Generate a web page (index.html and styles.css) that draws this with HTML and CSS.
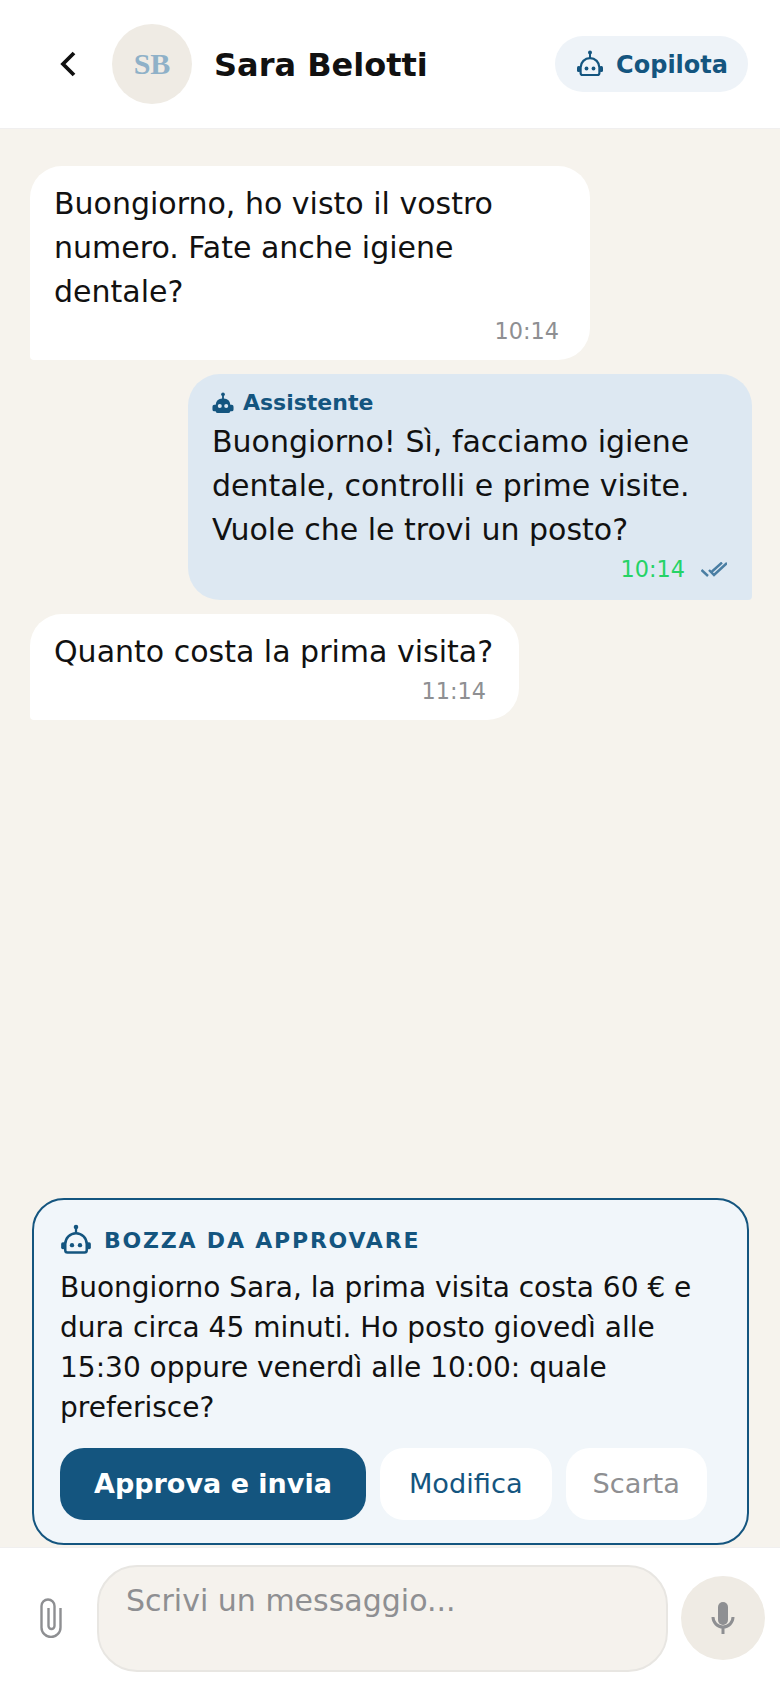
FILE: index.html
```html
<!DOCTYPE html>
<html lang="it">
<head>
    <meta charset="UTF-8">
    <meta name="viewport" content="width=device-width, initial-scale=1.0">
    <title>Sara Belotti</title>
    <link rel="stylesheet" href="styles.css">
</head>
<body>
    <svg class="defs" width="0" height="0">
        <symbol id="bot" viewBox="0 0 28 28">
            <circle cx="14" cy="2.6" r="2" fill="currentColor"/>
            <path d="M14 4v4" stroke="currentColor" stroke-width="2" fill="none"/>
            <path d="M4.6 17.5a9.4 9.4 0 0 1 18.8 0V23a2 2 0 0 1-2 2H6.600a2 2 0 0 1-2-2z" fill="none" stroke="currentColor" stroke-width="2.2"/>
            <rect x="1" y="16" width="3.600" height="6" rx="1.500" fill="currentColor"/>
            <rect x="23.400" y="16" width="3.600" height="6" rx="1.500" fill="currentColor"/>
            <circle cx="10.500" cy="18.500" r="1.900" fill="currentColor"/>
            <circle cx="17.500" cy="18.500" r="1.900" fill="currentColor"/>
        </symbol>
    </svg>

    <header class="topbar">
        <button class="back" type="button" aria-label="Indietro">
            <svg width="16" height="26" viewBox="0 0 16 26"><path d="M14 2 3 13l11 11" fill="none" stroke="#111" stroke-width="3.800"/></svg>
        </button>
        <div class="avatar">SB</div>
        <div class="name">Sara Belotti</div>
        <div class="copilot">
            <svg width="28" height="28"><use href="#bot"/></svg>
            <span class="copilot-label">Copilota</span>
        </div>
    </header>

    <main class="chat">
        <div class="messages">
            <div class="bubble in">
                <p>Buongiorno, ho visto il vostro numero. Fate anche igiene dentale?</p>
                <div class="meta"><span class="time">10:14</span></div>
            </div>
            <div class="bubble out">
                <div class="sender">
                    <svg width="22" height="22" viewBox="0 0 24 24">
                        <circle cx="12" cy="2.500" r="2"/>
                        <path d="M11 3h2v5h-2z"/>
                        <path fill-rule="evenodd" d="M4 14a7 7 0 0 1 7-7h2a7 7 0 0 1 7 7h1.500a2 2 0 0 1 2 2v3a2 2 0 0 1-2 2H20a2 2 0 0 1-2 2H6a2 2 0 0 1-2-2H2.500a2 2 0 0 1-2-2v-3a2 2 0 0 1 2-2zM8.500 13a2.200 2.200 0 1 0 0 4.400 2.200 2.200 0 0 0 0-4.400zm7 0a2.200 2.200 0 1 0 0 4.400 2.200 2.200 0 0 0 0-4.400z"/>
                    </svg>
                    <span>Assistente</span>
                </div>
                <p>Buongiorno! Sì, facciamo igiene dentale, controlli e prime visite. Vuole che le trovi un posto?</p>
                <div class="meta">
                    <span class="time green">10:14</span>
                    <svg width="26" height="15" viewBox="0 0 26 15"><path d="M.5 8 7 14M11 9.500 21 .5M8 8l5 5L26 1" fill="none" stroke="#4a7ea3" stroke-width="2.400"/></svg>
                </div>
            </div>
            <div class="bubble in short">
                <p>Quanto costa la prima visita?</p>
                <div class="meta"><span class="time">11:14</span></div>
            </div>
        </div>

        <section class="draft">
            <div class="draft-title">
                <svg width="32" height="32"><use href="#bot"/></svg>
                <span>BOZZA DA APPROVARE</span>
            </div>
            <p>Buongiorno Sara, la prima visita costa 60 € e dura circa 45 minuti. Ho posto giovedì alle 15:30 oppure venerdì alle 10:00: quale preferisce?</p>
            <div class="actions">
                <button class="btn primary" type="button">Approva e invia</button>
                <button class="btn edit" type="button">Modifica</button>
                <button class="btn discard" type="button">Scarta</button>
            </div>
        </section>
    </main>

    <footer class="composer">
        <svg class="clip" width="22" height="40" viewBox="0 0 22 40"><path d="M20.500 10v19.500a9.500 9.500 0 0 1-19 0V8a6.500 6.500 0 0 1 13 0v20a3 3 0 0 1-6 0V10" fill="none" stroke="#8e8f92" stroke-width="2.400"/></svg>
        <div class="input">Scrivi un messaggio...</div>
        <button class="mic" type="button" aria-label="Microfono">
            <svg width="24" height="32" viewBox="0 0 24 32"><rect x="7" y="0" width="10" height="23" rx="5" fill="#8e8f92"/><path d="M2 15a10 10 0 0 0 20 0M12 25v7" fill="none" stroke="#8e8f92" stroke-width="3"/></svg>
        </button>
    </footer>
</body>
</html>
```

FILE: styles.css
```css
* {
    box-sizing: border-box;
}

body {
    display: flex;
    flex-direction: column;
    height: 1688px;
    margin: 0;
    font-family: "DejaVu Sans", sans-serif;
    color: #111;
    background-color: #f6f3ed;
}

p {
    margin: 0;
}

button {
    font-family: inherit;
    border: none;
    cursor: pointer;
}

.defs {
    position: absolute;
}

.topbar {
    display: flex;
    align-items: center;
    height: 129px;
    padding: 0 32px 0 60px;
    background-color: #fff;
    border-bottom: 1px solid #f0efef;
}

.back {
    display: flex;
    width: 52px;
    padding: 0;
    background: none;
}

.avatar {
    display: flex;
    align-items: center;
    justify-content: center;
    width: 80px;
    height: 80px;
    margin-right: 22px;
    border-radius: 50%;
    font-family: "Liberation Serif", serif;
    font-size: 30px;
    font-weight: bold;
    color: #8fb1c8;
    background-color: #efebe4;
}

.name {
    flex: 1;
    padding-top: 2px;
    font-size: 32px;
    font-weight: bold;
}

.copilot {
    display: flex;
    align-items: center;
    gap: 12px;
    height: 56px;
    padding: 0 20px 0 21px;
    border-radius: 28px;
    font-size: 24px;
    font-weight: bold;
    color: #14557f;
    background-color: #eef3f8;
}

.copilot-label {
    padding-top: 2px;
}

.chat {
    display: flex;
    flex: 1;
    flex-direction: column;
    justify-content: space-between;
    padding: 37px 28px 2px 30px;
}

.messages {
    display: flex;
    flex-direction: column;
    gap: 14px;
}

.bubble {
    padding: 16px 24px 12px;
    font-size: 30px;
    line-height: 44px;
}

.bubble.in {
    align-self: flex-start;
    max-width: 560px;
    border-radius: 32px 32px 32px 4px;
    background-color: #fff;
}

.bubble.short {
    padding-right: 26px;
}

.bubble.out {
    align-self: flex-end;
    width: 564px;
    padding: 13px 24px 14px;
    border-radius: 32px 32px 4px 32px;
    background-color: #dde8f2;
}

.sender {
    display: flex;
    align-items: center;
    gap: 9px;
    height: 32px;
    margin-bottom: 1px;
    font-size: 22px;
    font-weight: bold;
    color: #14557f;
    fill: #14557f;
}

.meta {
    display: flex;
    align-items: center;
    justify-content: flex-end;
    gap: 16px;
    height: 34px;
    padding-right: 7px;
}

.bubble.out .meta {
    padding-right: 1px;
}

.time {
    font-size: 22.400px;
    color: #8e8f92;
}

.time.green {
    color: #25d366;
}

.draft {
    margin: 0 3px 0 2px;
    padding: 24px 26px 23px;
    border: 2px solid #14557f;
    border-radius: 32px;
    background-color: #f1f6fa;
}

.draft p {
    font-size: 28px;
    line-height: 40px;
}

.draft-title {
    display: flex;
    align-items: center;
    gap: 12px;
    height: 32px;
    margin-bottom: 12px;
    font-size: 22px;
    font-weight: bold;
    letter-spacing: 1.800px;
    color: #14557f;
}

.actions {
    display: flex;
    gap: 14px;
    margin-top: 20px;
}

.btn {
    height: 72px;
    padding: 0 29px 2px;
    border-radius: 24px;
    font-size: 27.200px;
    white-space: nowrap;
    background-color: #fff;
}

.btn.primary {
    padding: 0 34px 2px;
    font-size: 27px;
    font-weight: bold;
    color: #fff;
    background-color: #14557f;
}

.btn.edit {
    color: #14557f;
}

.btn.discard {
    padding: 0 27px 2px;
    color: #8e8f92;
}

.composer {
    display: flex;
    align-items: center;
    gap: 13px;
    height: 141px;
    padding: 0 15px 0 40px;
    background-color: #fff;
    border-top: 1px solid #f0efef;
}

.clip {
    flex: none;
    margin-right: 22px;
}

.input {
    flex: 1;
    height: 107px;
    padding: 14px 27px;
    border: 2px solid #e8e6e2;
    border-radius: 40px;
    font-size: 30px;
    line-height: 40px;
    color: #8e8f92;
    background-color: #f5f2ed;
}

.mic {
    display: flex;
    align-items: center;
    justify-content: center;
    flex: none;
    width: 84px;
    height: 84px;
    padding: 0;
    border-radius: 50%;
    background-color: #efebe4;
}
```
